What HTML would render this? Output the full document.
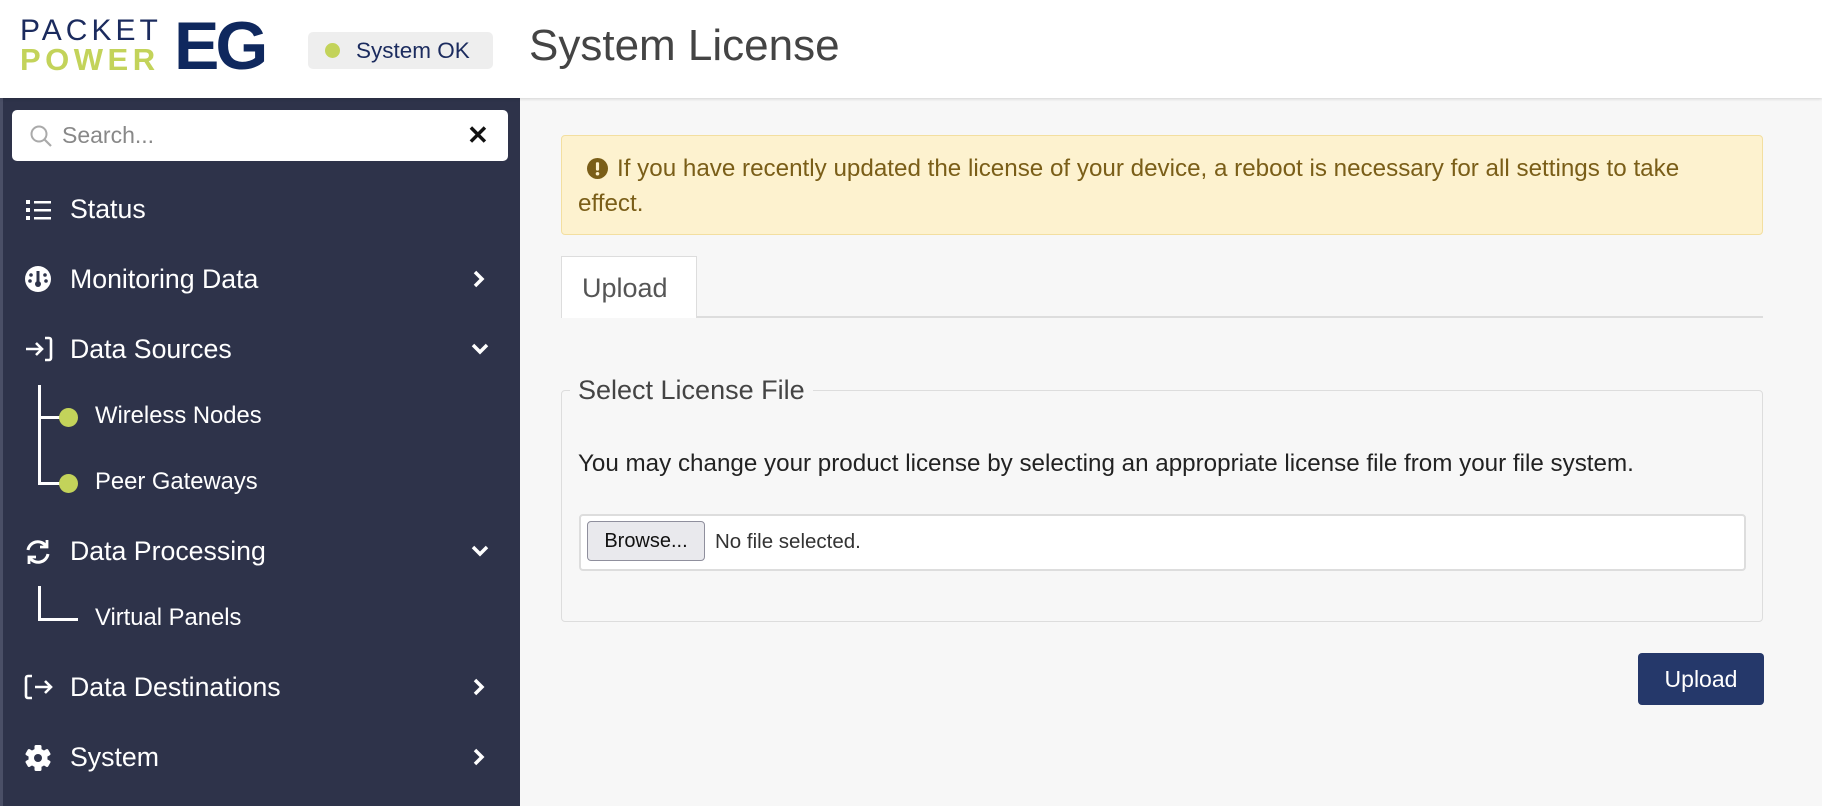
<!DOCTYPE html>
<html><head><meta charset="utf-8"><style>
*{box-sizing:border-box;margin:0;padding:0}
body{width:1822px;height:806px;overflow:hidden;background:#f7f7f7;font-family:"Liberation Sans",Arial,sans-serif;position:relative}
.hdr{position:absolute;left:0;top:0;width:1822px;height:98px;background:#fff;box-shadow:0 1px 3px rgba(0,0,0,.15);z-index:2}
.side{position:absolute;left:0;top:98px;width:520px;height:708px;background:#2e334a;border-left:3px solid #4a4f66}
.abs{position:absolute}
.nav{position:absolute;left:67px;color:#fff;font-size:26.7px;line-height:30px}
.sub{position:absolute;left:92px;color:#fff;font-size:23.8px;line-height:28px}
.chev{position:absolute;left:467px}
.dot{position:absolute;width:19px;height:19px;border-radius:50%;background:#c3d35a}
.ln{position:absolute;background:#fff}
</style></head><body>
<div class="hdr">
  <div class="abs" style="left:20px;top:16px;font-size:30px;letter-spacing:4px;color:#1b2b5e;line-height:30px">PACKET</div>
  <div class="abs" style="left:20px;top:44px;font-size:31px;letter-spacing:4.5px;color:#c3d35a;font-weight:bold;line-height:32px">POWER</div>
  <div class="abs" style="left:174px;top:12px;font-size:68px;font-weight:bold;color:#0f285e;line-height:68px;letter-spacing:-4px">EG</div>
  <div class="abs" style="left:308px;top:32px;width:185px;height:37px;background:#eeeeee;border-radius:5px"></div>
  <div class="dot" style="left:325px;top:43px;width:15px;height:15px"></div>
  <div class="abs" style="left:356px;top:37px;font-size:22.5px;color:#1b2b5e;line-height:28px">System OK</div>
  <div class="abs" style="left:529px;top:21px;font-size:44px;color:#444;line-height:50px">System License</div>
</div>
<div class="side">
  <div class="abs" style="left:9px;top:12px;width:496px;height:51px;background:#fff;border-radius:5px"></div>
  <svg class="abs" style="left:26px;top:26px" width="24" height="24" viewBox="0 0 24 24"><circle cx="10" cy="10" r="7.5" fill="none" stroke="#aaa" stroke-width="2"/><line x1="15.5" y1="15.5" x2="22" y2="22" stroke="#aaa" stroke-width="2.2"/></svg>
  <div class="abs" style="left:59px;top:23px;font-size:23px;color:#888;line-height:28px">Search...</div>
  <div class="abs" style="left:464px;top:20px;font-size:26px;color:#111;font-weight:bold;line-height:34px">✕</div>

  <svg class="abs" style="left:22px;top:100px" width="28" height="24" viewBox="0 0 28 24" fill="#fff"><rect x="1" y="2" width="4" height="4"/><rect x="1" y="10" width="4" height="4"/><rect x="1" y="18" width="4" height="4"/><rect x="9" y="3" width="17" height="2.5"/><rect x="9" y="11" width="17" height="2.5"/><rect x="9" y="19" width="17" height="2.5"/></svg>
  <div class="nav" style="top:96px">Status</div>

  <svg class="abs" style="left:21px;top:167px" width="28" height="28" viewBox="0 0 28 28"><circle cx="14" cy="14" r="13" fill="#fff"/><rect x="12.5" y="6" width="3" height="12" fill="#2e334a"/><circle cx="14" cy="19" r="3" fill="#2e334a"/><circle cx="7" cy="10" r="1.8" fill="#2e334a"/><circle cx="21" cy="10" r="1.8" fill="#2e334a"/><circle cx="6" cy="16" r="1.8" fill="#2e334a"/><circle cx="22" cy="16" r="1.8" fill="#2e334a"/></svg>
  <div class="nav" style="top:166px">Monitoring Data</div>
  <svg class="chev" style="top:171px" width="18" height="20" viewBox="0 0 18 20"><path d="M5 3l7 7-7 7" fill="none" stroke="#fff" stroke-width="3.5"/></svg>

  <svg class="abs" style="left:21px;top:238px" width="30" height="26" viewBox="0 0 30 26" fill="none" stroke="#fff" stroke-width="2.6"><path d="M2 13h16M12 7l6 6-6 6"/><path d="M21 2h4a2 2 0 0 1 2 2v18a2 2 0 0 1-2 2h-4"/></svg>
  <div class="nav" style="top:236px">Data Sources</div>
  <svg class="chev" style="top:242px" width="20" height="18" viewBox="0 0 20 18"><path d="M3 5l7 7 7-7" fill="none" stroke="#fff" stroke-width="3.5"/></svg>

  <div class="ln" style="left:35px;top:287px;width:3px;height:98px"></div>
  <div class="ln" style="left:35px;top:318px;width:26px;height:3px"></div>
  <div class="ln" style="left:35px;top:384px;width:26px;height:3px"></div>
  <div class="dot" style="left:56px;top:310px"></div>
  <div class="dot" style="left:56px;top:376px"></div>
  <div class="sub" style="top:304px">Wireless Nodes</div>
  <div class="sub" style="top:370px">Peer Gateways</div>

  <svg class="abs" style="left:21px;top:440px" width="28" height="28" viewBox="0 0 28 28" fill="none" stroke="#fff" stroke-width="3"><path d="M4 12a10 10 0 0 1 18-4"/><path d="M24 16a10 10 0 0 1-18 4"/><path d="M23 2v7h-7" stroke-width="2.8"/><path d="M5 26v-7h7" stroke-width="2.8"/></svg>
  <div class="nav" style="top:438px">Data Processing</div>
  <svg class="chev" style="top:444px" width="20" height="18" viewBox="0 0 20 18"><path d="M3 5l7 7 7-7" fill="none" stroke="#fff" stroke-width="3.5"/></svg>

  <div class="ln" style="left:35px;top:488px;width:3px;height:35px"></div>
  <div class="ln" style="left:35px;top:520px;width:40px;height:3px"></div>
  <div class="sub" style="top:506px">Virtual Panels</div>

  <svg class="abs" style="left:21px;top:576px" width="30" height="26" viewBox="0 0 30 26" fill="none" stroke="#fff" stroke-width="2.6"><path d="M8 2h-4a2 2 0 0 0-2 2v18a2 2 0 0 0 2 2h4"/><path d="M11 13h16M21 7l6 6-6 6"/></svg>
  <div class="nav" style="top:574px">Data Destinations</div>
  <svg class="chev" style="top:579px" width="18" height="20" viewBox="0 0 18 20"><path d="M5 3l7 7-7 7" fill="none" stroke="#fff" stroke-width="3.5"/></svg>

  <svg class="abs" style="left:21px;top:646px" width="28" height="28" viewBox="0 0 28 28"><g fill="#fff" transform="translate(14 14)"><rect x="-3.5" y="-13" width="7" height="26" rx="1.5"/><rect x="-3.5" y="-13" width="7" height="26" rx="1.5" transform="rotate(60)"/><rect x="-3.5" y="-13" width="7" height="26" rx="1.5" transform="rotate(120)"/><circle r="9.5"/></g><circle cx="14" cy="14" r="4" fill="#2e334a"/></svg>
  <div class="nav" style="top:644px">System</div>
  <svg class="chev" style="top:649px" width="18" height="20" viewBox="0 0 18 20"><path d="M5 3l7 7-7 7" fill="none" stroke="#fff" stroke-width="3.5"/></svg>
</div>

<div class="abs" style="left:561px;top:135px;width:1202px;height:100px;background:#fdf2cf;border:1px solid #f3dfa0;border-radius:4px"></div>
<svg class="abs" style="left:587px;top:158px" width="21" height="21" viewBox="0 0 20 20"><circle cx="10" cy="10" r="10" fill="#7a5e18"/><rect x="8.5" y="4" width="3" height="8" rx="1" fill="#fdf2cf"/><circle cx="10" cy="15" r="1.7" fill="#fdf2cf"/></svg>
<div class="abs" style="left:578px;top:151px;width:1119px;font-size:24.2px;line-height:35px;color:#7a5e18;text-indent:39px">If you have recently updated the license of your device, a reboot is necessary for all settings to take effect.</div>

<div class="abs" style="left:561px;top:316px;width:1202px;height:2px;background:#ddd"></div>
<div class="abs" style="left:561px;top:256px;width:136px;height:62px;background:#fff;border:1px solid #ddd;border-bottom:none"></div>
<div class="abs" style="left:582px;top:272px;font-size:27px;color:#555;line-height:32px">Upload</div>

<div class="abs" style="left:561px;top:390px;width:1202px;height:232px;border:1px solid #ddd;border-radius:4px"></div>
<div class="abs" style="left:570px;top:374px;padding:0 8px;background:#f7f7f7;font-size:27px;color:#444;line-height:32px">Select License File</div>
<div class="abs" style="left:578px;top:451px;font-size:24.2px;color:#222;line-height:26px">You may change your product license by selecting an appropriate license file from your file system.</div>
<div class="abs" style="left:579px;top:514px;width:1167px;height:57px;background:#fff;border:2px solid #ddd;border-radius:4px"></div>
<div class="abs" style="left:587px;top:521px;width:118px;height:40px;background:#e9e9ed;border:1px solid #8f8f9d;border-radius:4px;font-size:20px;line-height:38px;text-align:center;color:#111">Browse...</div>
<div class="abs" style="left:715px;top:529px;font-size:20.5px;color:#333;line-height:26px">No file selected.</div>

<div class="abs" style="left:1638px;top:653px;width:126px;height:52px;background:#25386a;border-radius:4px;color:#fff;font-size:23px;line-height:52px;text-align:center">Upload</div>
</body></html>
